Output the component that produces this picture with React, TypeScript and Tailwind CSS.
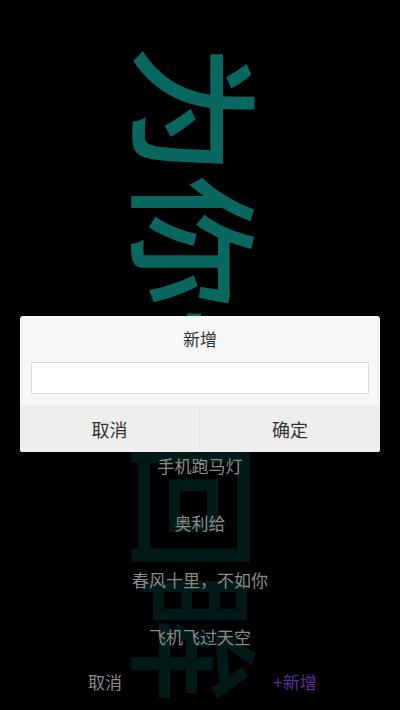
import { useState } from 'react'

const items = ['手机跑马灯', '奥利给', '春风十里，不如你', '飞机飞过天空']

export default function App() {
  const [value, setValue] = useState('')

  return (
    <div className="relative h-[710px] w-[400px] overflow-hidden bg-black font-['Noto_Sans_CJK_SC',sans-serif]">
      {/* marquee text, turned sideways */}
      <div className="flex justify-center pt-[44px]">
        <div className="whitespace-nowrap text-[132px] font-medium leading-none text-[#08675e] [writing-mode:vertical-rl] [text-orientation:sideways]">
          为你一回眸
        </div>
      </div>

      {/* picker panel */}
      <div className="absolute inset-x-0 bottom-0 top-[437px] bg-black/75">
        <div className="flex flex-col">
          {items.map((item) => (
            <div
              key={item}
              className="flex h-[57px] items-center justify-center text-[17px] text-[#8a8a8a]"
            >
              {item}
            </div>
          ))}
        </div>
        <div className="grid h-[34px] grid-cols-2 px-[10px] text-[17px]">
          <button className="text-[#8a8a8a]">取消</button>
          <button className="text-[#5c2c9c]">+新增</button>
        </div>
      </div>

      {/* add dialog */}
      <div className="absolute left-5 right-5 top-[316px] overflow-hidden rounded-[3px] bg-[#f6f7f7]">
        <div className="flex h-[46px] items-center justify-center text-[17px] text-[#333]">
          新增
        </div>
        <div className="px-[11px]">
          <input
            value={value}
            onChange={(e) => setValue(e.target.value)}
            className="block h-8 w-full border border-[#dcdcdc] bg-white px-2 text-[16px] text-[#333] outline-none"
          />
        </div>
        <div className="mt-3 grid h-[46px] grid-cols-2 bg-[#eeeeee] text-[18px] text-[#333]">
          <button className="border-r border-[#e3e3e3]">取消</button>
          <button>确定</button>
        </div>
      </div>
    </div>
  )
}
